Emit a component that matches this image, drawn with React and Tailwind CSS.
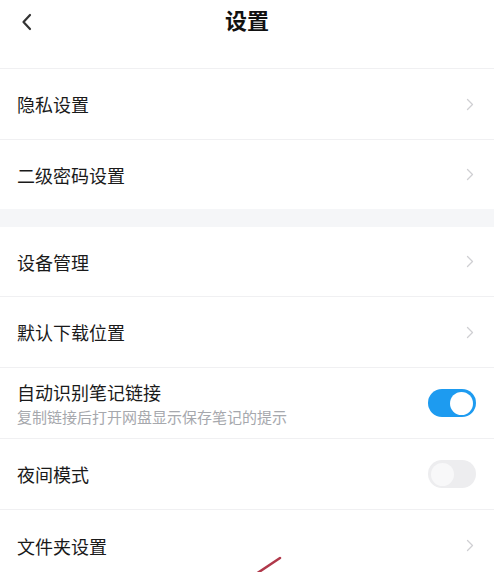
import React from "react";

const Chevron = () => (
  <svg width="8" height="13" viewBox="0 0 8 13" fill="none">
    <path d="M1.5 1.5 L6.5 6.5 L1.5 11.5" stroke="#cfcfd3" strokeWidth="1.3" strokeLinecap="round" strokeLinejoin="round" />
  </svg>
);

const Row = ({ title, children, sub, last, h = "h-[71px]" }) => (
  <div className={`flex items-center justify-between pl-[17px] pr-[20px] ${h} ${last ? "" : "border-b border-[#f0f0f2]"}`}>
    <div className="flex flex-col">
      <span className="text-[18px] leading-[24px] text-[#1a1a1a]">{title}</span>
      {sub && <span className="text-[15px] leading-[20px] mt-[3px] text-[#a6a8ad]">{sub}</span>}
    </div>
    {children}
  </div>
);

const Toggle = ({ on }) =>
  on ? (
    <div className="w-[48px] h-[28px] rounded-full bg-[#1d9bf0] flex items-center justify-end pr-[3px] mr-[-2px]">
      <div className="w-[23px] h-[23px] rounded-full bg-white" />
    </div>
  ) : (
    <div className="w-[48px] h-[28px] rounded-full bg-[#ededef] flex items-center pl-[3px] mr-[-2px]">
      <div className="w-[23px] h-[23px] rounded-full bg-[#f8f8f9]" />
    </div>
  );

export default function App() {
  return (
    <div
      className="relative w-[500px] h-[572px] overflow-hidden bg-white"
      style={{ fontFamily: '"Noto Sans CJK SC", "Noto Sans", sans-serif' }}
    >
      <div className="w-[494px]">
        <div className="relative h-[69px] flex items-start justify-center border-b border-[#f0f0f2]">
          <div className="absolute left-[20px] top-[13px]">
            <svg width="14" height="18" viewBox="0 0 14 18" fill="none">
              <path d="M10 2 L3.5 9 L10 16" stroke="#333" strokeWidth="2.2" strokeLinecap="round" strokeLinejoin="round" />
            </svg>
          </div>
          <span className="mt-[4px] text-[22px] leading-[30px] font-bold text-[#111]">设置</span>
        </div>
        <Row title="隐私设置"><Chevron /></Row>
        <Row title="二级密码设置" last h="h-[69px]"><Chevron /></Row>
        <div className="h-[18px] bg-[#f5f6f8]" />
        <Row title="设备管理" h="h-[70px]"><Chevron /></Row>
        <Row title="默认下载位置"><Chevron /></Row>
        <Row title="自动识别笔记链接" sub="复制链接后打开网盘显示保存笔记的提示"><Toggle on /></Row>
        <Row title="夜间模式"><Toggle /></Row>
        <Row title="文件夹设置" last><Chevron /></Row>
      </div>
      <svg className="absolute left-[250px] top-[552px]" width="40" height="24" viewBox="0 0 40 24">
        <path d="M6 22 L30 6" stroke="#b0384a" strokeWidth="2.5" strokeLinecap="round" />
      </svg>
    </div>
  );
}
